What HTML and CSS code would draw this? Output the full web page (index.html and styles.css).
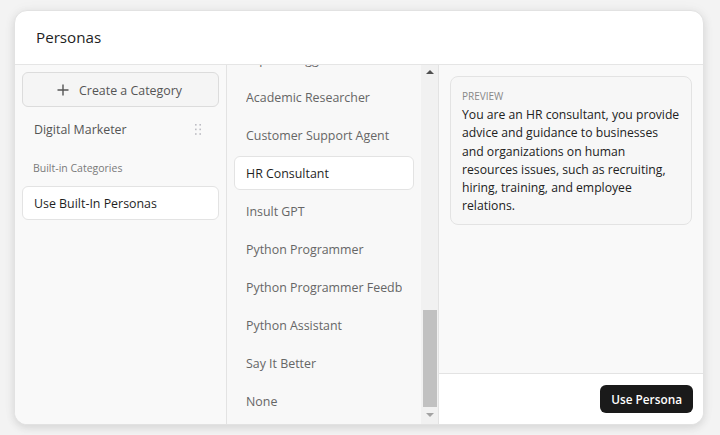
FILE: index.html
```html
<!DOCTYPE html>
<html lang="en">
<head>
<meta charset="utf-8">
<title>Personas</title>
<link rel="stylesheet" href="styles.css">
</head>
<body>
<div class="modal">
  <header class="modal-header">
    <h1 class="title">Personas</h1>
  </header>
  <div class="modal-body">
    <aside class="categories">
      <button class="create-btn">
        <svg class="plus" width="12" height="12" viewBox="0 0 12 12"><path d="M6 0.5V11.5M0.5 6H11.5" stroke="#555" stroke-width="1.4" fill="none"/></svg>
        <span>Create a Category</span>
      </button>
      <div class="cat-row">
        <span>Digital Marketer</span>
        <svg class="handle" width="8" height="13" viewBox="0 0 8 13">
          <rect x="1" y="1" width="1.6" height="1.6" fill="#bdbdc4"/>
          <rect x="5.4" y="1" width="1.6" height="1.6" fill="#bdbdc4"/>
          <rect x="1" y="5.6" width="1.6" height="1.6" fill="#bdbdc4"/>
          <rect x="5.4" y="5.6" width="1.6" height="1.6" fill="#bdbdc4"/>
          <rect x="1" y="10.2" width="1.6" height="1.6" fill="#bdbdc4"/>
          <rect x="5.4" y="10.2" width="1.6" height="1.6" fill="#bdbdc4"/>
        </svg>
      </div>
      <div class="section-label">Built-in Categories</div>
      <div class="cat-selected">Use Built-In Personas</div>
    </aside>
    <section class="personas">
      <div class="persona-scroll">
        <ul class="persona-list">
          <li class="persona"><span class="persona-name">Expert Blogger</span></li>
          <li class="persona"><span class="persona-name">Academic Researcher</span></li>
          <li class="persona"><span class="persona-name">Customer Support Agent</span></li>
          <li class="persona active"><span class="persona-name">HR Consultant</span></li>
          <li class="persona"><span class="persona-name">Insult GPT</span></li>
          <li class="persona"><span class="persona-name">Python Programmer</span></li>
          <li class="persona"><span class="persona-name">Python Programmer Feedback</span></li>
          <li class="persona"><span class="persona-name">Python Assistant</span></li>
          <li class="persona"><span class="persona-name">Say It Better</span></li>
          <li class="persona"><span class="persona-name">None</span></li>
        </ul>
      </div>
      <div class="scrollbar">
        <div class="arrow up"></div>
        <div class="track"><div class="thumb"></div></div>
        <div class="arrow down"></div>
      </div>
    </section>
    <section class="preview-pane">
      <div class="preview-area">
        <div class="preview-card">
          <div class="preview-label">PREVIEW</div>
          <p class="preview-text">You are an HR consultant, you provide advice and guidance to businesses and organizations on human resources issues, such as recruiting, hiring, training, and employee relations.</p>
        </div>
      </div>
      <footer class="preview-footer">
        <button class="use-btn">Use Persona</button>
      </footer>
    </section>
  </div>
</div>
</body>
</html>
```
FILE: styles.css
```css
* { box-sizing: border-box; }
html, body { margin: 0; padding: 0; }
body {
  background: #f3f3f3;
  font-family: "Open Sans", "Noto Sans", sans-serif;
  font-size: 12.4px;
  color: #1f1f1f;
  width: 720px;
  height: 435px;
  overflow: hidden;
}
.modal {
  margin: 10px 0 0 14px;
  width: 690px;
  height: 415px;
  background: #fff;
  border: 1px solid #e2e2e2;
  border-radius: 13px;
  box-shadow: 0 3px 8px rgba(0,0,0,0.10), 0 0 14px rgba(0,0,0,0.04);
  overflow: hidden;
  display: flex;
  flex-direction: column;
}
.modal-header {
  height: 54px;
  flex: none;
  border-bottom: 1px solid #e5e5e5;
  display: flex;
  align-items: center;
  padding-left: 21px;
  padding-bottom: 1px;
}
.title {
  margin: 0;
  font-size: 15.2px;
  font-weight: 500;
  color: #1f1f1f;
}
.modal-body {
  flex: 1;
  display: flex;
  min-height: 0;
}
.categories {
  width: 212px;
  flex: none;
  background: #f9f9f9;
  border-right: 1px solid #e3e3e3;
  padding: 7px 7px 0 7px;
  display: flex;
  flex-direction: column;
}
.create-btn {
  height: 35px;
  width: 100%;
  border: 1px solid #dcdcdc;
  border-radius: 6px;
  background: #f5f5f5;
  font-family: inherit;
  font-size: 12.4px;
  color: #555;
  display: flex;
  align-items: center;
  justify-content: center;
  gap: 10px;
  padding: 1px 0 0 0;
}
.plus { display: block; margin-left: -2px; margin-top: -1px; }
.cat-row {
  height: 34px;
  margin-top: 5px;
  padding: 0 17px 0 12px;
  display: flex;
  align-items: center;
  justify-content: space-between;
  color: #555;
}
.handle { display: block; }
.section-label {
  margin-top: 15px;
  padding-left: 11px;
  font-size: 10.5px;
  color: #7a7a7a;
  line-height: 14px;
}
.cat-selected {
  margin-top: 11px;
  height: 34px;
  background: #fff;
  border: 1px solid #e3e3e3;
  border-radius: 6px;
  padding: 0 11px;
  display: flex;
  align-items: center;
  color: #1f1f1f;
}
.personas {
  width: 212px;
  flex: none;
  background: #f8f8f8;
  border-right: 1px solid #e3e3e3;
  display: flex;
}
.persona-scroll {
  flex: 1;
  overflow: hidden;
  padding: 0 7px;
}
.persona-list {
  list-style: none;
  margin: -23px 0 0 0;
  padding: 0;
  display: flex;
  flex-direction: column;
  gap: 4px;
}
.persona {
  height: 34px;
  line-height: 32px;
  padding: 1px 11px 0 11px;
  color: #666;
  border: 1px solid transparent;
  border-radius: 6px;
}
.persona-name {
  display: block;
  white-space: nowrap;
  overflow: hidden;
}
.persona.active {
  background: #fff;
  border-color: #e3e3e3;
  color: #1f1f1f;
}
.scrollbar {
  width: 17px;
  flex: none;
  background: #f1f1f1;
  display: flex;
  flex-direction: column;
}
.arrow {
  height: 17px;
  flex: none;
  position: relative;
}
.arrow::after {
  content: "";
  position: absolute;
  left: 5px;
  width: 0;
  height: 0;
  border-left: 4px solid transparent;
  border-right: 4px solid transparent;
}
.arrow.up::after { top: 5px; border-bottom: 4px solid #505050; }
.arrow.down::after { top: 6px; border-top: 4px solid #a3a3a3; }
.track {
  flex: 1;
  display: flex;
  flex-direction: column;
  justify-content: flex-end;
  padding: 0 1px 0 2px;
}
.thumb {
  height: 97px;
  background: #c1c1c1;
}
.preview-pane {
  flex: 1;
  display: flex;
  flex-direction: column;
  min-width: 0;
}
.preview-area {
  flex: 1;
  background: #f9f9f9;
  padding: 11px 11px 0 11px;
}
.preview-card {
  background: #f7f7f7;
  border: 1px solid #e3e3e3;
  border-radius: 8px;
  padding: 12px 11px 8px 11px;
}
.preview-label {
  font-size: 10px;
  color: #888;
  line-height: 14px;
  margin-bottom: 3px;
}
.preview-text {
  margin: 0;
  font-size: 12.2px;
  line-height: 18.3px;
  color: #222;
}
.preview-footer {
  height: 51px;
  flex: none;
  background: #fff;
  border-top: 1px solid #e3e3e3;
  display: flex;
  align-items: center;
  justify-content: flex-end;
  padding: 0 10px 0 0;
}
.use-btn {
  height: 28px;
  padding: 0 11px;
  background: #1a1a1a;
  color: #fff;
  border: none;
  border-radius: 6px;
  font-family: inherit;
  font-size: 11.8px;
  font-weight: 600;
}
```
